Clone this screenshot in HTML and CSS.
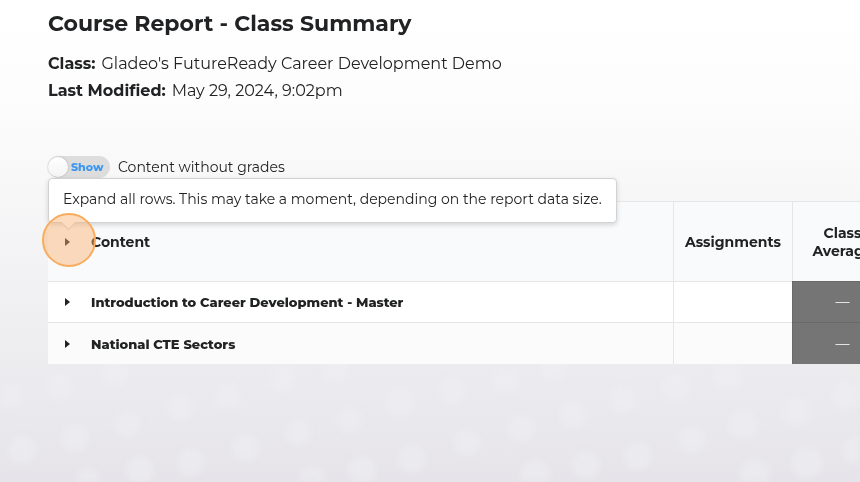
FILE: index.html
```html
<!DOCTYPE html>
<html lang="en">
<head>
    <meta charset="UTF-8">
    <meta name="viewport" content="width=device-width, initial-scale=1.0">
    <title>Course Report - Class Summary</title>
    <link rel="stylesheet" href="styles.css">
</head>
<body>
    <svg class="backdrop" viewBox="0 0 860 482" preserveAspectRatio="xMidYMax slice" aria-hidden="true">
        <g fill="#f0eff3" opacity="0.5">
            <circle cx="60" cy="387" r="14"/><circle cx="115" cy="373" r="14"/><circle cx="10" cy="396" r="14"/>
            <circle cx="180" cy="407" r="14"/><circle cx="228" cy="396" r="14"/><circle cx="283" cy="379" r="14"/>
            <circle cx="335" cy="369" r="14"/><circle cx="400" cy="402" r="15"/><circle cx="349" cy="420" r="13"/>
            <circle cx="298" cy="433" r="13"/><circle cx="246" cy="448" r="14"/><circle cx="191" cy="462" r="14"/>
            <circle cx="140" cy="470" r="14"/><circle cx="127" cy="424" r="13"/><circle cx="75" cy="438" r="14"/>
            <circle cx="22" cy="450" r="14"/><circle cx="88" cy="482" r="13"/><circle cx="312" cy="481" r="14"/>
            <circle cx="362" cy="470" r="14"/><circle cx="412" cy="459" r="14"/><circle cx="452" cy="391" r="14"/>
            <circle cx="506" cy="381" r="14"/><circle cx="555" cy="367" r="14"/><circle cx="623" cy="400" r="14"/>
            <circle cx="676" cy="388" r="15"/><circle cx="728" cy="376" r="15"/><circle cx="846" cy="396" r="15"/>
            <circle cx="796" cy="412" r="15"/><circle cx="743" cy="425" r="15"/><circle cx="692" cy="440" r="14"/>
            <circle cx="638" cy="456" r="14"/><circle cx="586" cy="465" r="14"/><circle cx="573" cy="415" r="14"/>
            <circle cx="521" cy="428" r="14"/><circle cx="467" cy="443" r="14"/><circle cx="535" cy="475" r="15"/>
            <circle cx="755" cy="474" r="15"/><circle cx="807" cy="463" r="16"/><circle cx="857" cy="451" r="14"/>
        </g>
    </svg>
    <main class="report">
        <h1>Course Report - Class Summary</h1>
        <dl class="details">
            <div class="detail">
                <dt>Class:</dt>
                <dd>Gladeo's FutureReady Career Development Demo</dd>
            </div>
            <div class="detail">
                <dt>Last Modified:</dt>
                <dd>May 29, 2024, 9:02pm</dd>
            </div>
        </dl>

        <label class="toggle" for="show-ungraded">
            <span class="switch">
                <input type="checkbox" id="show-ungraded">
                <span class="switch-text">Show</span>
            </span>
            Content without grades
        </label>

        <table class="grades">
            <thead>
                <tr>
                    <th class="content" scope="col">
                        <div class="row-title">
                            <span class="expand-all">
                                <button type="button" class="expand" aria-label="Expand all rows" aria-describedby="expand-tip">
                                    <svg viewBox="0 0 5 8" width="5" height="8"><path d="M0 0L5 4L0 8Z"/></svg>
                                </button>
                                <span class="tooltip" id="expand-tip" role="tooltip">Expand all rows. This may take a moment, depending on the report data size.</span>
                                <span class="click-marker"></span>
                            </span>
                            Content
                        </div>
                    </th>
                    <th class="assignments" scope="col">Assignments</th>
                    <th class="average" scope="col">Class Average</th>
                </tr>
            </thead>
            <tbody>
                <tr>
                    <th class="content" scope="row">
                        <div class="row-title">
                            <button type="button" class="expand" aria-label="Expand row">
                                <svg viewBox="0 0 5 8" width="5" height="8"><path d="M0 0L5 4L0 8Z"/></svg>
                            </button>
                            Introduction to Career Development - Master
                        </div>
                    </th>
                    <td></td>
                    <td class="score">—</td>
                </tr>
                <tr>
                    <th class="content" scope="row">
                        <div class="row-title">
                            <button type="button" class="expand" aria-label="Expand row">
                                <svg viewBox="0 0 5 8" width="5" height="8"><path d="M0 0L5 4L0 8Z"/></svg>
                            </button>
                            National CTE Sectors
                        </div>
                    </th>
                    <td></td>
                    <td class="score">—</td>
                </tr>
            </tbody>
        </table>
    </main>
</body>
</html>
```

FILE: styles.css
```css
* {
    margin: 0;
    padding: 0;
    box-sizing: border-box;
}

body {
    min-height: 100vh;
    overflow: hidden;
    font-family: Montserrat, Inter, sans-serif;
    font-size: 14px;
    color: #212223;
    background: linear-gradient(#ffffff 0%, #fdfdfe 18%, #f7f7f8 40%, #ececef 76%, #e9e8ec 88%, #e6e4ea 100%);
}

/* Soft dots behind the page */
.backdrop {
    position: fixed;
    inset: 0;
    z-index: -1;
    width: 100%;
    height: 100%;
    filter: blur(3px);
}

.report {
    padding: 8px 0 48px 48px;
}

h1 {
    font-size: 22px;
    line-height: 32px;
    font-weight: 700;
}

.details {
    margin-top: 10px;
    font-size: 16px;
    line-height: 27px;
}

.detail {
    display: flex;
    gap: 6px;
}

.detail dt {
    font-weight: 700;
}

/* Toggle */
.toggle {
    display: flex;
    align-items: center;
    gap: 8px;
    width: fit-content;
    margin-top: 52px;
    line-height: 22px;
}

.switch {
    display: flex;
    align-items: center;
    gap: 3px;
    width: 62px;
    height: 22px;
    border-radius: 11px;
    background: #dddddd;
}

.switch input {
    appearance: none;
    width: 20px;
    height: 20px;
    border-radius: 50%;
    background: linear-gradient(#ffffff, #f4f4f4);
    box-shadow: 0 0 2px rgba(0, 0, 0, 0.3);
}

.switch-text {
    font-size: 11px;
    font-weight: 800;
    color: #3f98f0;
}

/* Table */
.grades {
    width: calc(100% + 32px);
    margin-top: 23px;
    table-layout: fixed;
    border-collapse: separate;
    border-spacing: 0;
    line-height: 18px;
}

.grades th,
.grades td {
    height: 41px;
    border-top: 1px solid #e5e6e8;
    border-left: 1px solid #e5e6e8;
    background: #ffffff;
    text-align: center;
    font-size: 13px;
    font-weight: 800;
}

.grades thead th {
    height: 80px;
    background: #f9fafc;
    font-size: 14px;
    font-weight: 700;
}

.grades .content {
    padding-left: 15px;
    border-left: none;
    text-align: left;
}

.grades .assignments {
    width: 119px;
}

.grades .average {
    width: 100px;
    padding: 0 16px;
}

.grades tbody tr:last-child th,
.grades tbody tr:last-child td {
    height: 42px;
    background: #fbfbfb;
}

.grades tbody .score,
.grades tbody tr:last-child .score {
    border-color: #696969;
    background: #757575;
    color: #ffffff;
    font-size: 14px;
    font-weight: 400;
}

.row-title {
    display: flex;
    align-items: center;
    gap: 20px;
}

.expand {
    display: flex;
    align-items: center;
    justify-content: center;
    width: 8px;
    height: 18px;
    border: none;
    background: none;
    cursor: pointer;
}

.expand path {
    fill: #212223;
}

.expand-all {
    position: relative;
}

.tooltip {
    position: absolute;
    bottom: 28px;
    left: -15px;
    padding: 9px 14px 12px;
    border: 1px solid #d2d2d3;
    border-radius: 4px;
    background: #ffffff;
    box-shadow: 0 2px 5px rgba(0, 0, 0, 0.15);
    font-size: 14px;
    line-height: 22px;
    font-weight: 400;
    white-space: nowrap;
}

.tooltip::after {
    content: "";
    position: absolute;
    bottom: -6px;
    left: 14px;
    width: 10px;
    height: 10px;
    border: 1px solid #d2d2d3;
    border-width: 0 1px 1px 0;
    background: #ffffff;
    transform: rotate(45deg);
}

.click-marker {
    position: absolute;
    top: -20px;
    left: -21px;
    width: 54px;
    height: 54px;
    border: 2px solid #f7ac5e;
    border-radius: 50%;
    background: rgba(250, 176, 110, 0.45);
    pointer-events: none;
}
```
